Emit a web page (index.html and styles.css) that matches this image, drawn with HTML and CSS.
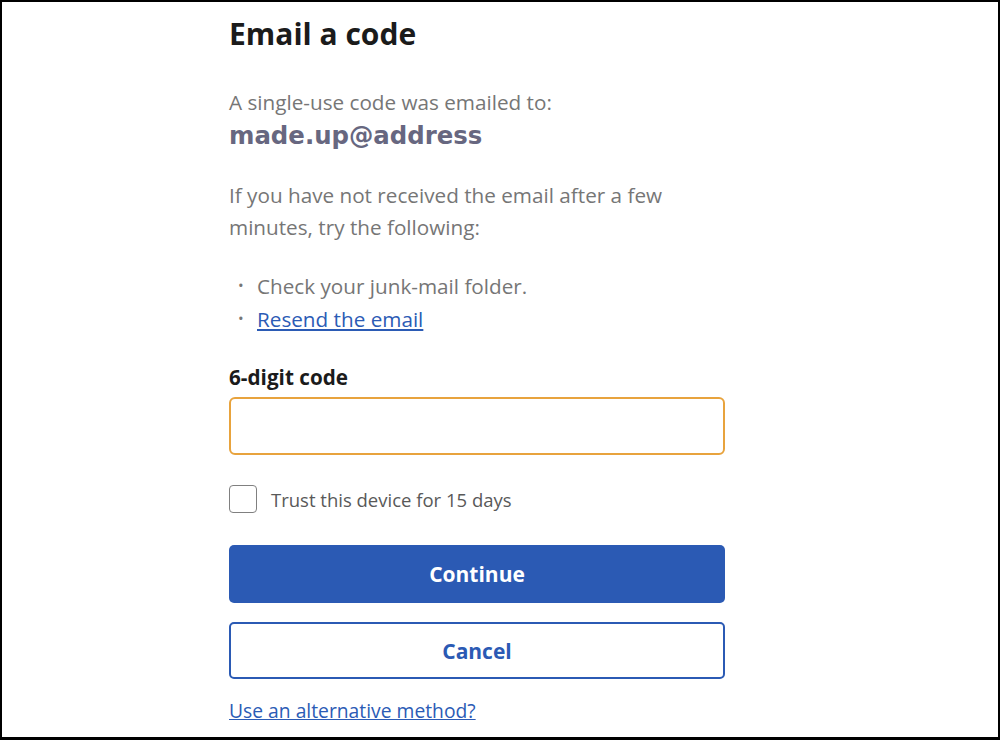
FILE: index.html
```html
<!DOCTYPE html>
<html lang="en">
<head>
<meta charset="utf-8">
<title>Email a code</title>
<link rel="stylesheet" href="styles.css">
</head>
<body>
<div class="frame">
  <main class="panel">
    <h1 class="title">Email a code</h1>
    <p class="sent">A single-use code was emailed to:</p>
    <p class="address">made.up@address</p>
    <p class="hint">If you have not received the email after a few minutes, try the following:</p>
    <ul class="tips">
      <li>Check your junk-mail folder.</li>
      <li><a href="#" class="link">Resend the email</a></li>
    </ul>
    <label class="field-label" for="code">6-digit code</label>
    <input class="code-input" id="code" type="text" inputmode="numeric">
    <label class="trust">
      <span class="box"></span>
      <span class="trust-text">Trust this device for 15 days</span>
    </label>
    <button class="btn btn-primary" type="button">Continue</button>
    <button class="btn btn-secondary" type="button">Cancel</button>
    <a href="#" class="link alt">Use an alternative method?</a>
  </main>
</div>
</body>
</html>
```

FILE: styles.css
```css
* { box-sizing: border-box; }
html, body { margin: 0; padding: 0; background: #fff; }
body { font-family: "Open Sans", "Liberation Sans", sans-serif; }
.frame {
  width: 1000px;
  height: 740px;
  border-top: 2px solid #000;
  border-left: 2px solid #000;
  border-right: 2px solid #000;
  border-bottom: 3px solid #000;
  overflow: hidden;
  position: relative;
}
.panel {
  width: 496px;
  margin-left: 227px;
  display: flex;
  flex-direction: column;
  align-items: stretch;
}
.title {
  font-size: 30px;
  font-weight: 700;
  color: #1b1b1b;
  margin: 12px 0 0;
  line-height: 40px;
}
.sent {
  font-size: 20.7px;
  color: #767676;
  margin: 34px 0 0;
  line-height: 28px;
}
.address {
  font-family: "DejaVu Sans", Verdana, sans-serif;
  font-weight: 700;
  font-size: 24.4px;
  color: #676780;
  margin: 6px 0 0;
  line-height: 28px;
}
.hint {
  font-size: 20.7px;
  color: #767676;
  line-height: 32px;
  margin: 29px 0 0;
}
.tips {
  list-style: none;
  margin: 27px 0 0;
  padding: 0;
  font-size: 20.7px;
  color: #767676;
  line-height: 33px;
}
.tips li {
  position: relative;
  padding-left: 28px;
}
.tips li::before {
  content: "\2022";
  position: absolute;
  left: 9px;
  top: -1px;
  font-size: 15px;
  color: #767676;
}
.link { color: #2b5bb5; text-decoration: underline; }
.field-label {
  font-size: 20.7px;
  font-weight: 700;
  color: #1b1b1b;
  margin-top: 27px;
  line-height: 28px;
}
.code-input {
  margin-top: 6px;
  height: 58px;
  width: 100%;
  border: 2px solid #e8a33d;
  border-radius: 6px;
  outline: none;
  font-size: 20px;
  padding: 0 14px;
  font-family: inherit;
}
.trust {
  display: flex;
  align-items: center;
  gap: 14px;
  margin-top: 30px;
}
.box {
  width: 28px;
  height: 28px;
  border: 1.5px solid #808080;
  border-radius: 4px;
  flex: none;
}
.trust-text {
  font-size: 18.5px;
  color: #595959;
}
.btn {
  width: 100%;
  height: 58px;
  border-radius: 5px;
  font-family: inherit;
  font-size: 21px;
  font-weight: 700;
  cursor: pointer;
}
.btn-primary {
  margin-top: 32px;
  background: #2b5ab4;
  color: #fff;
  border: none;
}
.btn-secondary {
  margin-top: 19px;
  background: #fff;
  color: #2b5ab4;
  border: 2px solid #2b5ab4;
  height: 57px;
}
.alt {
  margin-top: 18px;
  font-size: 19.3px;
  align-self: flex-start;
}
```
